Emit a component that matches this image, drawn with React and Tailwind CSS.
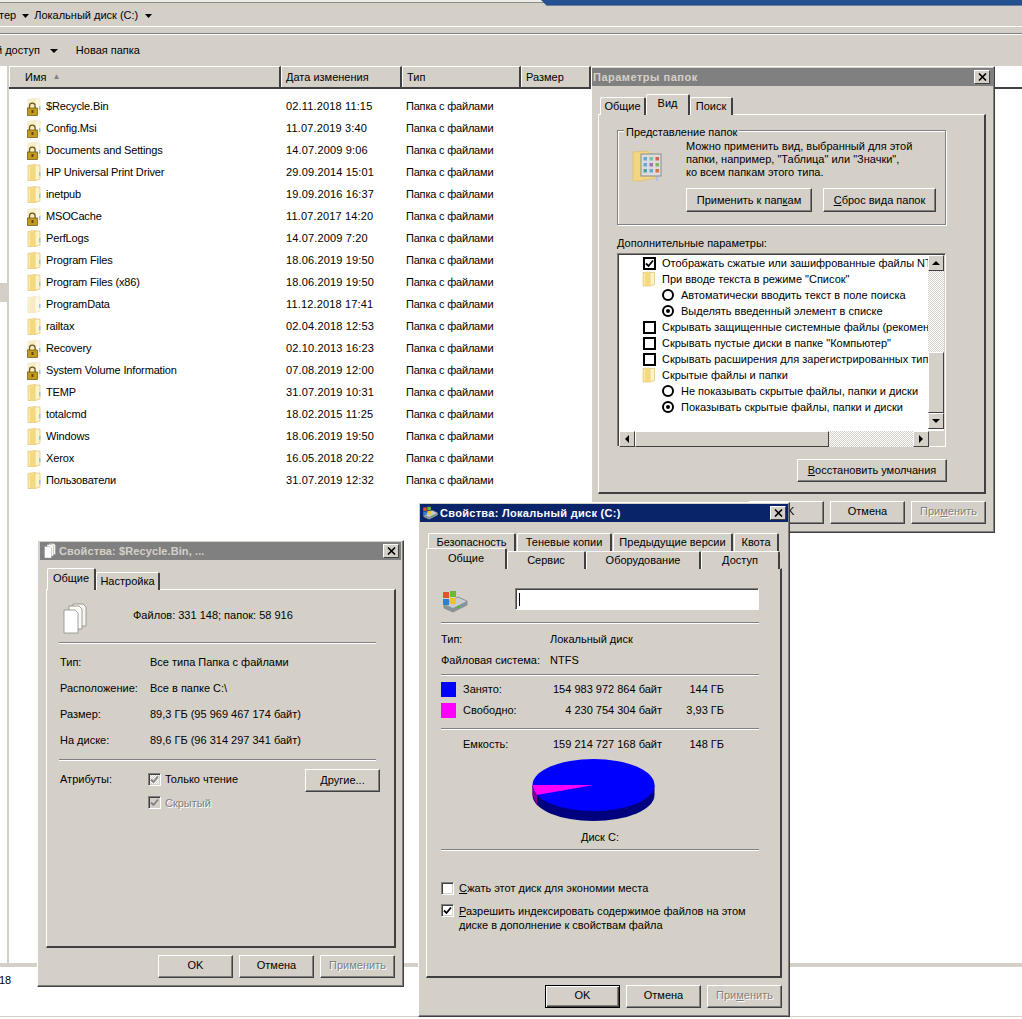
import React from "react";

const files = [
  ["$Recycle.Bin", "02.11.2018 11:15", "lock"],
  ["Config.Msi", "11.07.2019 3:40", "lock"],
  ["Documents and Settings", "14.07.2009 9:06", "lock"],
  ["HP Universal Print Driver", "29.09.2014 15:01", ""],
  ["inetpub", "19.09.2016 16:37", ""],
  ["MSOCache", "11.07.2017 14:20", "lock"],
  ["PerfLogs", "14.07.2009 7:20", ""],
  ["Program Files", "18.06.2019 19:50", ""],
  ["Program Files (x86)", "18.06.2019 19:50", ""],
  ["ProgramData", "11.12.2018 17:41", "pale"],
  ["railtax", "02.04.2018 12:53", ""],
  ["Recovery", "02.10.2013 16:23", "lock"],
  ["System Volume Information", "07.08.2019 12:00", "lock"],
  ["TEMP", "31.07.2019 10:31", ""],
  ["totalcmd", "18.02.2015 11:25", ""],
  ["Windows", "18.06.2019 19:50", ""],
  ["Xerox", "16.05.2018 20:22", ""],
  ["Пользователи", "31.07.2019 12:32", ""],
];

function Folder({ kind = "" }) {
  const pale = kind === "pale" || kind === "lock";
  const back = pale ? "#fbf3d6" : "#fae9a8";
  const front = pale ? "#f8ebc0" : "#f5d97f";
  const page = pale ? "#fdf8e6" : "#fdf3c8";
  return (
    <svg width="15" height="19" viewBox="0 0 15 19" className="shrink-0">
      <path d="M1 2.5 L8 1.5 L8 17.5 L1 17.5 Z" fill={back} stroke={pale ? "#eadfb4" : "#dcb85c"} strokeWidth="0.6" />
      <path d="M8 2 L13 2 L13 16 L8 17.5 Z" fill={page} stroke={pale ? "#eadfb4" : "#d8b860"} strokeWidth="0.6" />
      <path d="M3 3.5 L8 2 L8 17.5 L3 17.5 Z" fill={front} />
      <rect x="12" y="9" width="1.4" height="4" fill="#8cc4e8" />
      {kind === "lock" && (
        <g>
          <path d="M2.5 11 V9 a2.8 2.8 0 0 1 5.6 0 V11" fill="none" stroke="#6b5a20" strokeWidth="1.3" />
          <rect x="0.5" y="11" width="10" height="7.5" fill="#c49a1c" stroke="#6b5416" strokeWidth="0.7" />
          <rect x="4.5" y="13" width="2" height="3" fill="#5b4610" />
        </g>
      )}
    </svg>
  );
}

function SmallFolder() {
  return (
    <svg width="14" height="16" viewBox="0 0 14 16" className="shrink-0">
      <path d="M1 1.5 L8 1 L8 15 L1 15 Z" fill="#fae9a8" stroke="#dcb85c" strokeWidth="0.6" />
      <path d="M8 1.5 L12.5 1.5 L12.5 13.5 L8 15 Z" fill="#fdf3c8" stroke="#d8b860" strokeWidth="0.6" />
      <path d="M3 2.5 L8 1 L8 15 L3 15 Z" fill="#f5d97f" />
    </svg>
  );
}

function Btn({ w = "w-[75px]", h = "h-[23px]", children, disabled, primary, cls = "" }) {
  const border = primary
    ? "border border-black shadow-[inset_1px_1px_0_#fff,inset_-1px_-1px_0_#404040,inset_-2px_-2px_0_#808080]"
    : "border-t border-l border-t-white border-l-white border-r border-b border-r-[#404040] border-b-[#404040] shadow-[inset_-1px_-1px_0_#808080]";
  const color = disabled ? "text-[#808080] [text-shadow:1px_1px_0_#fff]" : "text-black";
  return <div className={`${w} ${h} ${border} ${color} ${cls} shrink-0 bg-[#d4d0c8] flex items-center justify-center`}>{children}</div>;
}

function Tab({ w, active, children, h, extra = "pb-[3px]" }) {
  return (
    <div
      className={`${w} ${h} ${active ? `z-10 ${extra}` : ""} relative shrink-0 flex items-center justify-center bg-[#d4d0c8] border-t border-l border-t-white border-l-white border-r-2 border-r-[#404040] rounded-t-[2px]`}
    >
      {children}
    </div>
  );
}

function Close() {
  return (
    <div className="w-[16px] h-[14px] shrink-0 bg-[#d4d0c8] border-t border-l border-t-white border-l-white border-r border-b border-r-[#404040] border-b-[#404040] flex items-center justify-center">
      <svg width="9" height="8" viewBox="0 0 9 8">
        <path d="M1 0.5 L8 7.5 M8 0.5 L1 7.5" stroke="#000" strokeWidth="1.6" />
      </svg>
    </div>
  );
}

function Sep({ w, className = "" }) {
  return <div className={`${w} ${className} h-[2px] bg-[#808080] border-b border-b-white`} />;
}

function ListCheck({ checked }) {
  return (
    <div className="w-[13px] h-[13px] mr-[6px] shrink-0 border-2 border-black bg-white flex items-center justify-center">
      {checked && (
        <svg width="9" height="9" viewBox="0 0 9 9">
          <path d="M1 4.5 L3.5 7 L8 1.5" fill="none" stroke="#000" strokeWidth="1.8" />
        </svg>
      )}
    </div>
  );
}

function Radio({ on }) {
  return (
    <div className="w-[12px] h-[12px] mr-[7px] shrink-0 rounded-full border-2 border-black bg-white flex items-center justify-center">
      {on && <div className="w-[4px] h-[4px] rounded-full bg-black" />}
    </div>
  );
}

function ClassicCheck({ checked, disabled, hatch }) {
  const bg = hatch
    ? "bg-[repeating-conic-gradient(#d4d0c8_0_25%,#fff_0_50%)] bg-[length:2px_2px]"
    : disabled
    ? "bg-[#d4d0c8]"
    : "bg-white";
  return (
    <div className={`${bg} w-[13px] h-[13px] shrink-0 border-t border-l border-t-[#808080] border-l-[#808080] border-r border-b border-r-white border-b-white shadow-[inset_1px_1px_0_#404040,inset_-1px_-1px_0_#d4d0c8] flex items-center justify-center`}>
      {checked && (
        <svg width="9" height="9" viewBox="0 0 9 9">
          <path d="M1 4.5 L3.5 7 L8 1.5" fill="none" stroke={disabled ? "#808080" : "#000"} strokeWidth="1.8" />
        </svg>
      )}
    </div>
  );
}

function ScrollBtn({ dir, w = "w-[16px]", h = "h-[16px]" }) {
  const points = { up: "0,5 4,1 8,5", down: "0,1 8,1 4,5", left: "5,0 5,8 1,4", right: "1,0 1,8 5,4" }[dir];
  const box = dir === "up" || dir === "down" ? "0 0 8 6" : "0 0 6 8";
  return (
    <div className={`${w} ${h} shrink-0 bg-[#d4d0c8] border-t border-l border-t-white border-l-white border-r border-b border-r-[#404040] border-b-[#404040] flex items-center justify-center`}>
      <svg width={dir === "up" || dir === "down" ? 8 : 6} height={dir === "up" || dir === "down" ? 6 : 8} viewBox={box}>
        <polygon points={points} fill="#000" />
      </svg>
    </div>
  );
}

const hatch = "bg-[repeating-conic-gradient(#d4d0c8_0_25%,#fff_0_50%)] bg-[length:2px_2px]";

function FolderViewIcon() {
  const c = ["#60a8d8", "#7fc0a0", "#d86050", "#60a8d8", "#a070b0", "#80b860", "#50a0a0", "#60a8d8", "#d87040"];
  return (
    <svg width="30" height="32" viewBox="0 0 30 32" className="shrink-0">
      <path d="M1 2 L16 1 L18 4 L24 4 L24 28 L8 31 L1 31 Z" fill="#f2d683" stroke="#d9bd6a" strokeWidth="0.7" />
      <rect x="24" y="27" width="2" height="4" fill="#b0c0e8" />
      <rect x="9" y="4" width="20" height="22" fill="#dcdcdc" stroke="#8c8c8c" />
      {c.map((col, i) => (
        <rect key={i} x={11.5 + (i % 3) * 6} y={7 + Math.floor(i / 3) * 6} width="3.5" height="3.5" fill={col} />
      ))}
    </svg>
  );
}

function FilesIcon({ size = 1 }) {
  return (
    <svg width={24 * size} height={31 * size} viewBox="0 0 24 31" className="shrink-0">
      <path d="M10 1 H20 L23 4 V23 H10 Z" fill="#f6f6f2" stroke="#8a8a80" strokeWidth="0.8" />
      <path d="M6 3 H16 L19 6 V26 H6 Z" fill="#fafaf6" stroke="#8a8a80" strokeWidth="0.8" />
      <path d="M1 7 H12 L15 10 V30 H1 Z" fill="#fff" stroke="#8a8a80" strokeWidth="0.8" />
    </svg>
  );
}

function DriveIcon({ small }) {
  return (
    <svg width={small ? 16 : 27} height={small ? 14 : 23} viewBox="0 0 27 23" className="shrink-0">
      <path d="M3 14 L17 7 L26 11 L26 15 L12 22 L3 18 Z" fill="#c8ccd0" stroke="#70787c" strokeWidth="0.7" />
      <path d="M3 14 L12 18 L26 11 L26 15 L12 22 L3 18 Z" fill="#8a9498" />
      <rect x="16" y="16" width="3" height="2" fill="#40c040" />
      <rect x="2" y="2" width="6" height="6" fill="#e0552a" />
      <rect x="9" y="1" width="6" height="6" fill="#6cb83c" />
      <rect x="2" y="9" width="6" height="6" fill="#2f7fd8" />
      <rect x="9" y="8" width="6" height="6" fill="#f0c030" />
    </svg>
  );
}

function FolderOptions() {
  return (
    <div className="absolute left-[591px] top-[66px] w-[404px] h-[467px] bg-[#d4d0c8] pt-[1px] border-t border-l border-t-white border-l-white border-r border-b border-r-[#404040] border-b-[#404040] shadow-[inset_-1px_-1px_0_#808080]">
      <div className="h-[18px] bg-[#808080] flex items-center justify-between pl-[1px] pr-[4px] font-bold text-[#d4d0c8] tracking-[0.5px]">
        <span>Параметры папок</span>
        <Close />
      </div>
      <div className="px-[6px] pt-[9px]">
        <div className="h-[20px] flex items-end pl-[2px] -mb-px">
          <Tab w="w-[46px]" h="h-[18px]">Общие</Tab>
          <Tab w="w-[44px]" h="h-[21px]" active>Вид</Tab>
          <Tab w="w-[43px]" h="h-[18px]">Поиск</Tab>
        </div>
        <div className="w-[388px] h-[380px] px-[18px] pt-[15px] border-t border-l border-t-white border-l-white border-r-2 border-b-2 border-r-[#404040] border-b-[#404040]">
          <div className="relative w-[329px] h-[95px] border border-[#808080] shadow-[1px_1px_0_#fff,inset_1px_1px_0_#fff] flex pt-[9px] pl-[14px]">
            <div className="absolute left-[6px] -top-[7px] bg-[#d4d0c8] px-[2px]">Представление папок</div>
            <div className="mt-[10px] mr-[24px]"><FolderViewIcon /></div>
            <div>
              <div className="leading-[13px]">
                <div>Можно применить вид, выбранный для этой</div>
                <div>папки, например, "Таблица" или "Значки",</div>
                <div>ко всем папкам этого типа.</div>
              </div>
              <div className="flex gap-[11px] mt-[9px]">
                <Btn w="w-[126px]" h="h-[24px]" cls="pt-[1px]"><span>Применить к пап<u>к</u>ам</span></Btn>
                <Btn w="w-[113px]" h="h-[24px]" cls="pt-[1px]"><span><u>С</u>брос вида папок</span></Btn>
              </div>
            </div>
          </div>
          <div className="mt-[12px] leading-[13px]">Дополнительные параметры:</div>
          <div className="mt-[3px] w-[329px] h-[194px] border border-t-[#808080] border-l-[#808080] border-r-white border-b-white shadow-[inset_1px_1px_0_#404040,inset_-1px_-1px_0_#d4d0c8] p-[1px]">
            <div className="flex h-[176px]">
              <div className="w-[310px] h-[176px] bg-white overflow-hidden whitespace-nowrap">
                {[
                  ["c", "Отображать сжатые или зашифрованные файлы NTFS другим цветом", true],
                  ["f", "При вводе текста в режиме \"Список\""],
                  ["r", "Автоматически вводить текст в поле поиска", false],
                  ["r", "Выделять введенный элемент в списке", true],
                  ["c", "Скрывать защищенные системные файлы (рекомендуется)", false],
                  ["c", "Скрывать пустые диски в папке \"Компьютер\"", false],
                  ["c", "Скрывать расширения для зарегистрированных типов файлов", false],
                  ["f", "Скрытые файлы и папки"],
                  ["r", "Не показывать скрытые файлы, папки и диски", false],
                  ["r", "Показывать скрытые файлы, папки и диски", true],
                ].map(([t, label, on], i) => (
                  <div key={i} className={`${t === "r" ? "pl-[43px]" : "pl-[24px]"} h-[16px] flex items-center`}>
                    {t === "c" && <ListCheck checked={on} />}
                    {t === "f" && <div className="mr-[6px] -ml-[1px]"><SmallFolder /></div>}
                    {t === "r" && <Radio on={on} />}
                    <span>{label}</span>
                  </div>
                ))}
              </div>
              <div className="w-[16px] h-[176px] bg-white flex flex-col">
                <ScrollBtn dir="up" />
                <div className={`${hatch} h-[81px]`} />
                <div className="h-[61px] bg-[#d4d0c8] border-t border-l border-t-white border-l-white border-r border-b border-r-[#404040] border-b-[#404040]" />
                <ScrollBtn dir="down" />
              </div>
            </div>
            <div className="flex h-[16px]">
              <ScrollBtn dir="left" />
              <div className="w-[194px] bg-[#d4d0c8] border-t border-l border-t-white border-l-white border-r border-b border-r-[#404040] border-b-[#404040]" />
              <div className={`${hatch} w-[84px]`} />
              <ScrollBtn dir="right" />
            </div>
          </div>
          <div className="mt-[12px] flex pl-[180px]">
            <Btn w="w-[150px]"><span><u>В</u>осстановить умолчания</span></Btn>
          </div>
        </div>
        <div className="flex justify-end gap-[6px] mt-[7px] pr-[2px]">
          <Btn cls="pb-[2px]">OK</Btn>
          <Btn cls="pb-[2px]">Отмена</Btn>
          <Btn cls="pb-[2px]" disabled><span>При<u>м</u>енить</span></Btn>
        </div>
      </div>
    </div>
  );
}

function RecycleProps() {
  const rows = [
    ["Тип:", "Все типа Папка с файлами"],
    ["Расположение:", "Все в папке C:\\"],
    ["Размер:", "89,3 ГБ (95 969 467 174 байт)"],
    ["На диске:", "89,6 ГБ (96 314 297 341 байт)"],
  ];
  return (
    <div className="absolute left-[37px] top-[540px] w-[367px] h-[447px] bg-[#d4d0c8] pt-[1px] border-t border-l border-t-white border-l-white border-r border-b border-r-[#404040] border-b-[#404040] shadow-[inset_-1px_-1px_0_#808080]">
      <div className="h-[18px] ml-[2px] mr-[2px] bg-[#808080] flex items-center justify-between pl-[4px] pr-[2px] font-bold text-[#d4d0c8] tracking-[0.1px]">
        <span className="flex items-center gap-[3px]"><FilesIcon size={0.5} /> Свойства: $Recycle.Bin, ...</span>
        <Close />
      </div>
      <div className="px-[8px] pt-[9px]">
        <div className="h-[21px] flex items-end pl-[1px] -mb-px">
          <Tab w="w-[49px]" h="h-[22px]" active>Общие</Tab>
          <Tab w="w-[64px]" h="h-[18px]">Настройка</Tab>
        </div>
        <div className="w-[350px] h-[359px] pt-[10px] pl-[12px] border-t border-l border-t-white border-l-white border-r-2 border-b-2 border-r-[#404040] border-b-[#404040]">
          <div className="flex items-center h-[31px] pl-[4px]">
            <div className="mt-[5px]"><FilesIcon /></div>
            <span className="ml-[46px]">Файлов: 331 148; папок: 58 916</span>
          </div>
          <Sep w="w-[317px]" className="mt-[11px]" />
          <div className="mt-[12px] flex flex-col gap-[13px] leading-[13px] pl-[1px]">
            {rows.map(([a, b]) => (
              <div key={a} className="flex">
                <div className="w-[90px]">{a}</div>
                <div>{b}</div>
              </div>
            ))}
          </div>
          <Sep w="w-[317px]" className="mt-[12px]" />
          <div className="flex mt-[8px] pl-[1px]">
            <div className="w-[88px] pt-[4px] leading-[13px]">Атрибуты:</div>
            <div className="pt-[2px] w-[157px]">
              <div className="flex items-center gap-[4px]">
                <ClassicCheck checked disabled hatch />
                <span>Только чтение</span>
              </div>
              <div className="flex items-center gap-[4px] mt-[7px] text-[#808080] [text-shadow:1px_1px_0_#fff]">
                <ClassicCheck checked disabled />
                <span>Скрытый</span>
              </div>
            </div>
            <Btn>Другие...</Btn>
          </div>
        </div>
        <div className="flex justify-end gap-[6px] mt-[7px]">
          <Btn cls="pb-[2px]">OK</Btn>
          <Btn cls="pb-[2px]">Отмена</Btn>
          <Btn cls="pb-[2px]" disabled>Применить</Btn>
        </div>
      </div>
    </div>
  );
}

function Pie() {
  return (
    <svg width="124" height="64" viewBox="0 0 124 64" className="ml-[91px] mt-[8px] block">
      <path d="M0.5 26 V36 A61 26 0 0 0 122.5 36 V26 Z" fill="#00007f" />
      <path d="M0.5 26 V36 L5 46 V36 Z" fill="#8a0090" />
      <ellipse cx="61.5" cy="26" rx="61" ry="26" fill="#0000ff" />
      <path d="M61.5 26 L0.5 26 Q1 31 5 36 Z" fill="#ff00ff" />
    </svg>
  );
}

function DiskProps() {
  return (
    <div className="absolute left-[418px] top-[502px] w-[372px] h-[515px] bg-[#d4d0c8] pt-[1px] border-t border-l border-t-white border-l-white border-r border-b border-r-[#404040] border-b-[#404040] shadow-[inset_-1px_-1px_0_#808080]">
      <div className="h-[18px] ml-[1px] mr-[1px] bg-[#0a246a] flex items-center justify-between pl-[2px] pr-[2px] font-bold text-white tracking-[0.3px]">
        <span className="flex items-center gap-[2px]"><DriveIcon small /> Свойства: Локальный диск (C:)</span>
        <Close />
      </div>
      <div className="pl-[7px] pt-[11px]">
        <div className="h-[18px] flex pl-[2px] gap-[1px]">
          <Tab w="w-[88px]" h="h-[18px]">Безопасность</Tab>
          <Tab w="w-[95px]" h="h-[18px]">Теневые копии</Tab>
          <Tab w="w-[120px]" h="h-[18px]">Предыдущие версии</Tab>
          <Tab w="w-[45px]" h="h-[18px]">Квота</Tab>
        </div>
        <div className="h-[18px] flex items-end -mb-px">
          <Tab w="w-[81px]" h="h-[21px]" active extra="pb-[1px]">Общие</Tab>
          <Tab w="w-[79px]" h="h-[18px]">Сервис</Tab>
          <Tab w="w-[115px]" h="h-[18px]">Оборудование</Tab>
          <Tab w="w-[79px]" h="h-[18px]">Доступ</Tab>
        </div>
        <div className="w-[356px] h-[410px] pl-[14px] pt-[19px] border-t border-l border-t-white border-l-white border-r-2 border-b-2 border-r-[#404040] border-b-[#404040]">
          <div className="flex items-start h-[22px]">
            <div className="mt-[2px]"><DriveIcon /></div>
            <div className="ml-[47px] w-[244px] h-[22px] bg-white border border-t-[#808080] border-l-[#808080] border-r-white border-b-white shadow-[inset_1px_1px_0_#404040] flex items-center pl-[3px]">
              <div className="w-px h-[13px] bg-black" />
            </div>
          </div>
          <Sep w="w-[318px]" className="mt-[12px]" />
          <div className="mt-[9px] flex leading-[13px]"><div className="w-[109px]">Тип:</div><div>Локальный диск</div></div>
          <div className="mt-[8px] flex leading-[13px]"><div className="w-[109px]">Файловая система:</div><div>NTFS</div></div>
          <Sep w="w-[318px]" className="mt-[7px]" />
          <div className="mt-[6px] flex items-center h-[15px]">
            <div className="w-[15px] h-[15px] bg-[#0000ff]" />
            <div className="w-[74px] ml-[7px]">Занято:</div>
            <div className="w-[125px] text-right">154 983 972 864 байт</div>
            <div className="w-[62px] text-right">144 ГБ</div>
          </div>
          <div className="mt-[6px] flex items-center h-[15px]">
            <div className="w-[15px] h-[15px] bg-[#ff00ff]" />
            <div className="w-[74px] ml-[7px]">Свободно:</div>
            <div className="w-[125px] text-right">4 230 754 304 байт</div>
            <div className="w-[62px] text-right">3,93 ГБ</div>
          </div>
          <Sep w="w-[318px]" className="mt-[10px]" />
          <div className="mt-[8px] flex items-center h-[13px]">
            <div className="w-[15px]" />
            <div className="w-[74px] ml-[7px]">Емкость:</div>
            <div className="w-[125px] text-right">159 214 727 168 байт</div>
            <div className="w-[62px] text-right">148 ГБ</div>
          </div>
          <Pie />
          <div className="mt-[8px] w-[318px] text-center leading-[13px]">Диск С:</div>
          <Sep w="w-[318px]" className="mt-[5px]" />
          <div className="mt-[29px] flex items-center gap-[5px]">
            <ClassicCheck />
            <span><u>С</u>жать этот диск для экономии места</span>
          </div>
          <div className="mt-[7px] flex gap-[5px]">
            <ClassicCheck checked />
            <span className="leading-[14px]"><u>Р</u>азрешить индексировать содержимое файлов на этом<br />диске в дополнение к свойствам файла</span>
          </div>
        </div>
        <div className="flex gap-[6px] mt-[7px] pl-[119px]">
          <Btn cls="pb-[2px]" primary>OK</Btn>
          <Btn cls="pb-[2px]">Отмена</Btn>
          <Btn cls="pb-[2px]" disabled><span>При<u>м</u>енить</span></Btn>
        </div>
      </div>
    </div>
  );
}

const Head = ({ w, children }) => (
  <div className={`${w} h-full shrink-0 bg-[#d4d0c8] flex items-center pl-[4px] border-t border-l border-t-white border-l-white border-r-2 border-r-[#404040]`}>{children}</div>
);

export default function App() {
  return (
    <div className="relative w-[1022px] h-[1019px] overflow-hidden bg-white flex flex-col text-[11px] text-black [font-family:'Liberation_Sans',sans-serif]">
      <div className="h-[3px] bg-[#eeece6] border-b border-b-[#8a8a88]" />
      <div className="absolute left-[541px] right-0 top-0 h-[6px] bg-[#23508f] border-b border-b-[#6a7f9c] [clip-path:polygon(0_0,100%_0,100%_100%,6px_100%)]" />
      <div className="h-[24px] bg-[#d4d0c8] flex items-center pt-[2px] border-b border-b-white">
        <span className="-ml-[1px]">тер</span>
        <svg width="7" height="4" viewBox="0 0 7 4" className="ml-[6px]"><polygon points="0,0 7,0 3.5,4" fill="#000" /></svg>
        <span className="ml-[5px]">Локальный диск (C:)</span>
        <svg width="7" height="4" viewBox="0 0 7 4" className="ml-[7px]"><polygon points="0,0 7,0 3.5,4" fill="#000" /></svg>
      </div>
      <div className="h-[7px] bg-[#d4d0c8] border-b border-b-[#808080]" />
      <div className="h-[32px] bg-[#d4d0c8] border-t border-t-white flex items-center">
        <span className="-ml-[4px]">й доступ</span>
        <svg width="8" height="4" viewBox="0 0 8 4" className="ml-[10px]"><polygon points="0,0 8,0 4,4" fill="#000" /></svg>
        <span className="ml-[18px]">Новая папка</span>
      </div>

      <div className="flex h-[897px]">
        <div className="relative w-[7px] bg-white">
          <div className="absolute left-0 top-[217px] w-[7px] h-[19px] bg-[#d4d0c8]" />
        </div>
        <div className="w-[2px] bg-[#d4d0c8]" />
        <div className="flex-1 min-w-0">
          <div className="h-[23px] flex border-b-2 border-b-[#404040]">
            <Head w="w-[272px]"><span className="ml-[11px]">Имя</span><span className="ml-[6px] text-[#808080] text-[8px]">▲</span></Head>
            <Head w="w-[121px]">Дата изменения</Head>
            <Head w="w-[119px]">Тип</Head>
            <Head w="w-[70px]">Размер</Head>
          </div>
          <div className="pt-[6px]">
            {files.map(([name, date, kind]) => (
              <div key={name} className="h-[22px] flex items-center">
                <div className="w-[37px] pl-[18px] flex"><Folder kind={kind} /></div>
                <div className="w-[240px] tracking-[-0.15px]">{name}</div>
                <div className="w-[120px] tracking-[0.15px]">{date}</div>
                <div className="tracking-[-0.2px]">Папка с файлами</div>
              </div>
            ))}
          </div>
        </div>
      </div>

      <div className="h-[4px] bg-[#d4d0c8]" />
      <div className="h-[49px] bg-white flex items-start pt-[5px]">
        <span className="-ml-[1px]">18</span>
      </div>
      <div className="h-[1px] bg-[#d4d0c8]" />

      <FolderOptions />
      <RecycleProps />
      <DiskProps />
    </div>
  );
}
